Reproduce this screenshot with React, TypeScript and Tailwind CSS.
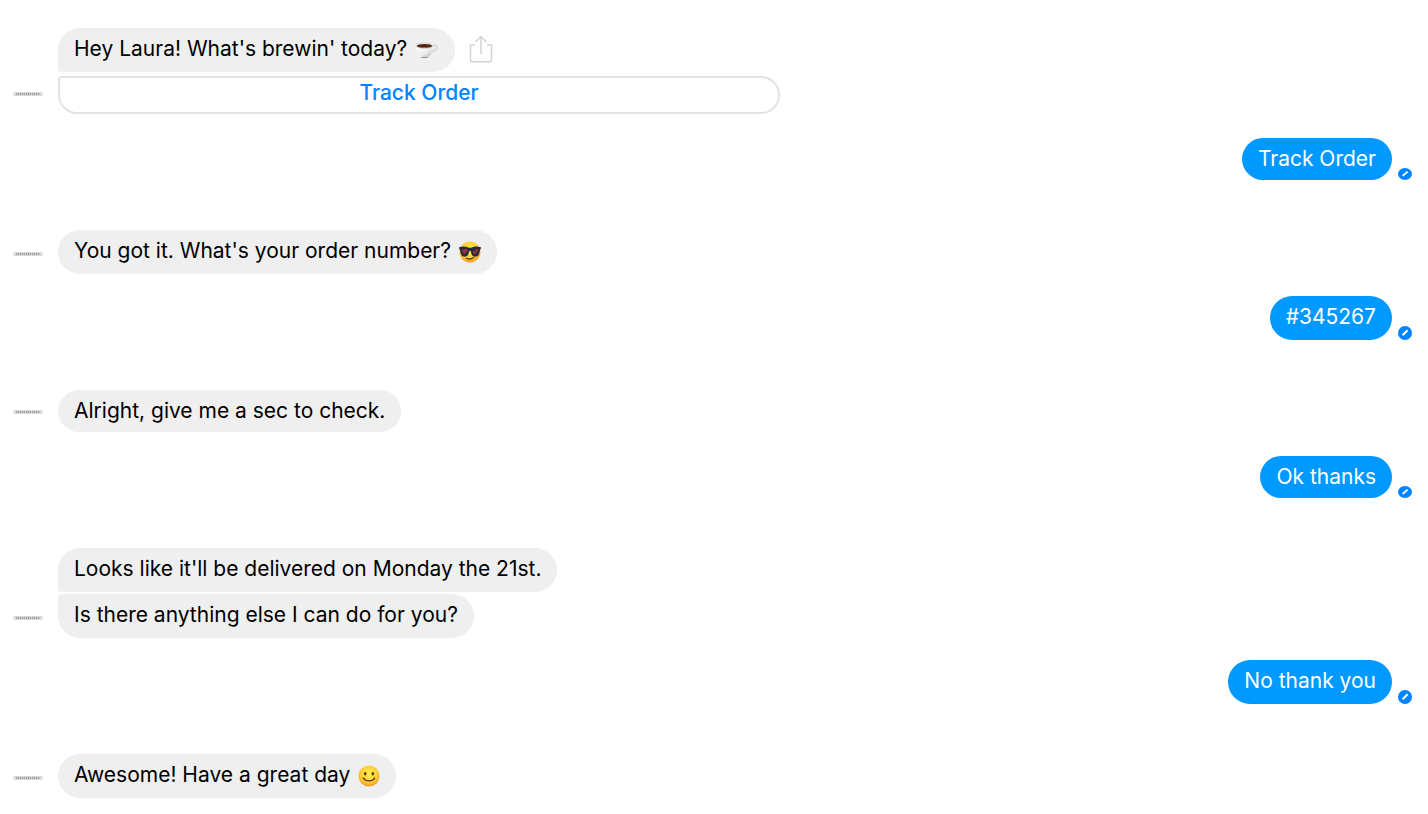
import type { ReactNode } from 'react';

function CoffeeEmoji() {
  return (
    <svg viewBox="0 0 24 20" role="img" aria-label="coffee" className="h-5 w-6">
      <defs>
        <linearGradient id="cup" x1="0" y1="0" x2="1" y2="1">
          <stop offset="0" stopColor="#ffffff" />
          <stop offset="0.6" stopColor="#ececec" />
          <stop offset="1" stopColor="#b4b4b4" />
        </linearGradient>
      </defs>
      <path d="M17 5.200c2.600-1.400 5.400-1 5 1.200-.3 2-2.800 3.600-5.600 4.600" fill="none" stroke="#d2d2d2" strokeWidth="1.500" />
      <path d="M1 4.500c0 5 1.400 9.400 4.600 11.600h7.800c3.200-2.200 4.600-6.600 4.600-11.600z" fill="url(#cup)" />
      <path d="M5.400 16c1 1.300 7.200 1.300 8.200 0z" fill="#8f8f8f" />
      <ellipse cx="9.500" cy="4.700" rx="8.500" ry="2.700" fill="#f5f5f5" stroke="#bcbcbc" strokeWidth="0.600" />
      <ellipse cx="9.500" cy="4.900" rx="7.600" ry="2" fill="#4a2410" />
      <path d="M3 5.800c3 1.500 10 1.500 13 0-3 .2-10 .2-13 0z" fill="#a5683c" />
    </svg>
  );
}

function FaceFill({ id }: { id: string }) {
  return (
    <>
      <defs>
        <radialGradient id={id} cx="0.5" cy="0.4" r="0.6">
          <stop offset="0" stopColor="#fff04a" />
          <stop offset="0.65" stopColor="#fdcf35" />
          <stop offset="1" stopColor="#f09a22" />
        </radialGradient>
      </defs>
      <circle cx="11" cy="11" r="10.500" fill={`url(#${id})`} />
    </>
  );
}

function SunglassesEmoji() {
  return (
    <svg viewBox="0 0 22 22" role="img" aria-label="sunglasses" className="size-[22px]">
      <FaceFill id="cool" />
      <path d="M0 6.200c3.500-.9 7-.7 9.400.2 1 .3 2.200.3 3.200 0 2.400-.9 5.900-1.100 9.400-.2l-.3 1.900c-.7.400-.8 1.500-1.200 3.500-.6 2.800-2 4.100-4.200 4.100-2.700 0-3.900-2-4.400-5-.2-1.300-1.600-1.300-1.800 0-.5 3-1.700 5-4.400 5-2.200 0-3.600-1.300-4.200-4.100-.4-2-.5-3.100-1.200-3.500z" fill="#2b2a3a" />
      <path d="M2.800 9.300l4-1.700 2.200 1.400-3.800 4.600zM13.400 11.800l4.400-4.100 1.600 1.700-3.700 4.200z" fill="#8e3442" />
      <path d="M7.500 17.300c2.300 1 5.200.8 7.100-.9" fill="none" stroke="#60321a" strokeWidth="1.300" strokeLinecap="round" />
    </svg>
  );
}

function SmileEmoji() {
  return (
    <svg viewBox="0 0 22 22" role="img" aria-label="smile" className="size-[22px]">
      <FaceFill id="smile" />
      <ellipse cx="7.200" cy="8.800" rx="1.300" ry="1.800" fill="#57341a" />
      <ellipse cx="14.800" cy="8.800" rx="1.300" ry="1.800" fill="#57341a" />
      <path d="M5.300 13c2.300 3.800 9.100 3.800 11.400 0" fill="none" stroke="#57341a" strokeWidth="1.400" strokeLinecap="round" />
    </svg>
  );
}

function ShareIcon() {
  return (
    <svg viewBox="0 0 24 28" className="h-7 w-6" fill="none" stroke="#d4d4d4" strokeWidth="1.500" strokeLinecap="round" strokeLinejoin="round">
      <path d="M5.500 10H1.500v15.200q0 1.500 1.500 1.500h18q1.500 0 1.500-1.500V10h-4" />
      <path d="M12 18.500V1.500M7 6.500l5-5 5 5" />
    </svg>
  );
}

// page logo, a thin grey strip in a square avatar slot
function Avatar() {
  return (
    <div className="flex h-10 w-[30px] shrink-0 items-center">
      <svg viewBox="0 0 30 4" className="h-1 w-full">
        <rect x="0.500" width="29" height="4" fill="#dadada" />
        <path d="M3 2h9M13 2h5M19 2h8" stroke="#a0a0a0" strokeWidth="1.800" strokeDasharray="1.300 0.700" />
      </svg>
    </div>
  );
}

function BotGroup({ children }: { children: ReactNode }) {
  return (
    <div className="flex items-end gap-[15px] pl-[13px]">
      <Avatar />
      <div className="flex min-w-0 flex-col items-start">{children}</div>
    </div>
  );
}

function BotBubble({
  text,
  emoji,
  shape = 'rounded-[22px]',
  compact,
}: {
  text: string;
  emoji?: ReactNode;
  shape?: string;
  compact?: boolean;
}) {
  return (
    <div className={`flex gap-2 bg-[#efefef] px-4 pt-[7px] text-black ${compact ? 'pb-[7px]' : 'pb-[9px]'} ${shape}`}>
      <p>{text}</p>
      {emoji && <span className="flex shrink-0 items-end pb-0.5">{emoji}</span>}
    </div>
  );
}

function UserBubble({ text, compact }: { text: string; compact?: boolean }) {
  return (
    <div className="flex items-end justify-end gap-1.5 pr-4">
      <p className={`rounded-[22px] bg-[#0099ff] px-4 pt-[7px] text-white ${compact ? 'pb-[7px]' : 'pb-[9px]'}`}>{text}</p>
      <svg viewBox="0 0 14 14" preserveAspectRatio="none" className={compact ? 'h-3 w-3.5' : 'h-3.5 w-3.5'}>
        <circle cx="7" cy="7" r="7" fill="#0084ff" />
        <path d="M5.300 8.500l3.600-3.600" stroke="#fff" strokeWidth="2" strokeLinecap="square" />
      </svg>
    </div>
  );
}

export default function App() {
  return (
    <main className="min-h-screen bg-white py-7 font-['Inter',sans-serif] text-[21px] leading-7">
      <BotGroup>
        <div className="flex items-center gap-3.5">
          <BotBubble text="Hey Laura! What's brewin' today?" emoji={<CoffeeEmoji />} shape="rounded-[22px] rounded-bl-[4px]" />
          <button aria-label="Share" className="pb-0.5">
            <ShareIcon />
          </button>
        </div>
        <button className="mt-1 w-[722px] max-w-full rounded-[20px] rounded-tl-[4px] border-2 border-[#e3e3e3] pt-px pb-[5px] font-medium text-[#0084ff]">
          Track Order
        </button>
      </BotGroup>
      <div className="mt-6">
        <UserBubble text="Track Order" compact />
      </div>
      <div className="mt-[50px]">
        <BotGroup>
          <BotBubble text="You got it. What's your order number?" emoji={<SunglassesEmoji />} />
        </BotGroup>
      </div>
      <div className="mt-[22px]">
        <UserBubble text="#345267" />
      </div>
      <div className="mt-[50px]">
        <BotGroup>
          <BotBubble text="Alright, give me a sec to check." compact />
        </BotGroup>
      </div>
      <div className="mt-6">
        <UserBubble text="Ok thanks" compact />
      </div>
      <div className="mt-[50px]">
        <BotGroup>
          <BotBubble text="Looks like it'll be delivered on Monday the 21st." shape="rounded-[22px] rounded-bl-[4px]" />
          <div className="mt-0.5">
            <BotBubble text="Is there anything else I can do for you?" shape="rounded-[22px] rounded-tl-[4px]" />
          </div>
        </BotGroup>
      </div>
      <div className="mt-[22px]">
        <UserBubble text="No thank you" />
      </div>
      <div className="mt-[50px]">
        <BotGroup>
          <BotBubble text="Awesome! Have a great day" emoji={<SmileEmoji />} />
        </BotGroup>
      </div>
    </main>
  );
}
